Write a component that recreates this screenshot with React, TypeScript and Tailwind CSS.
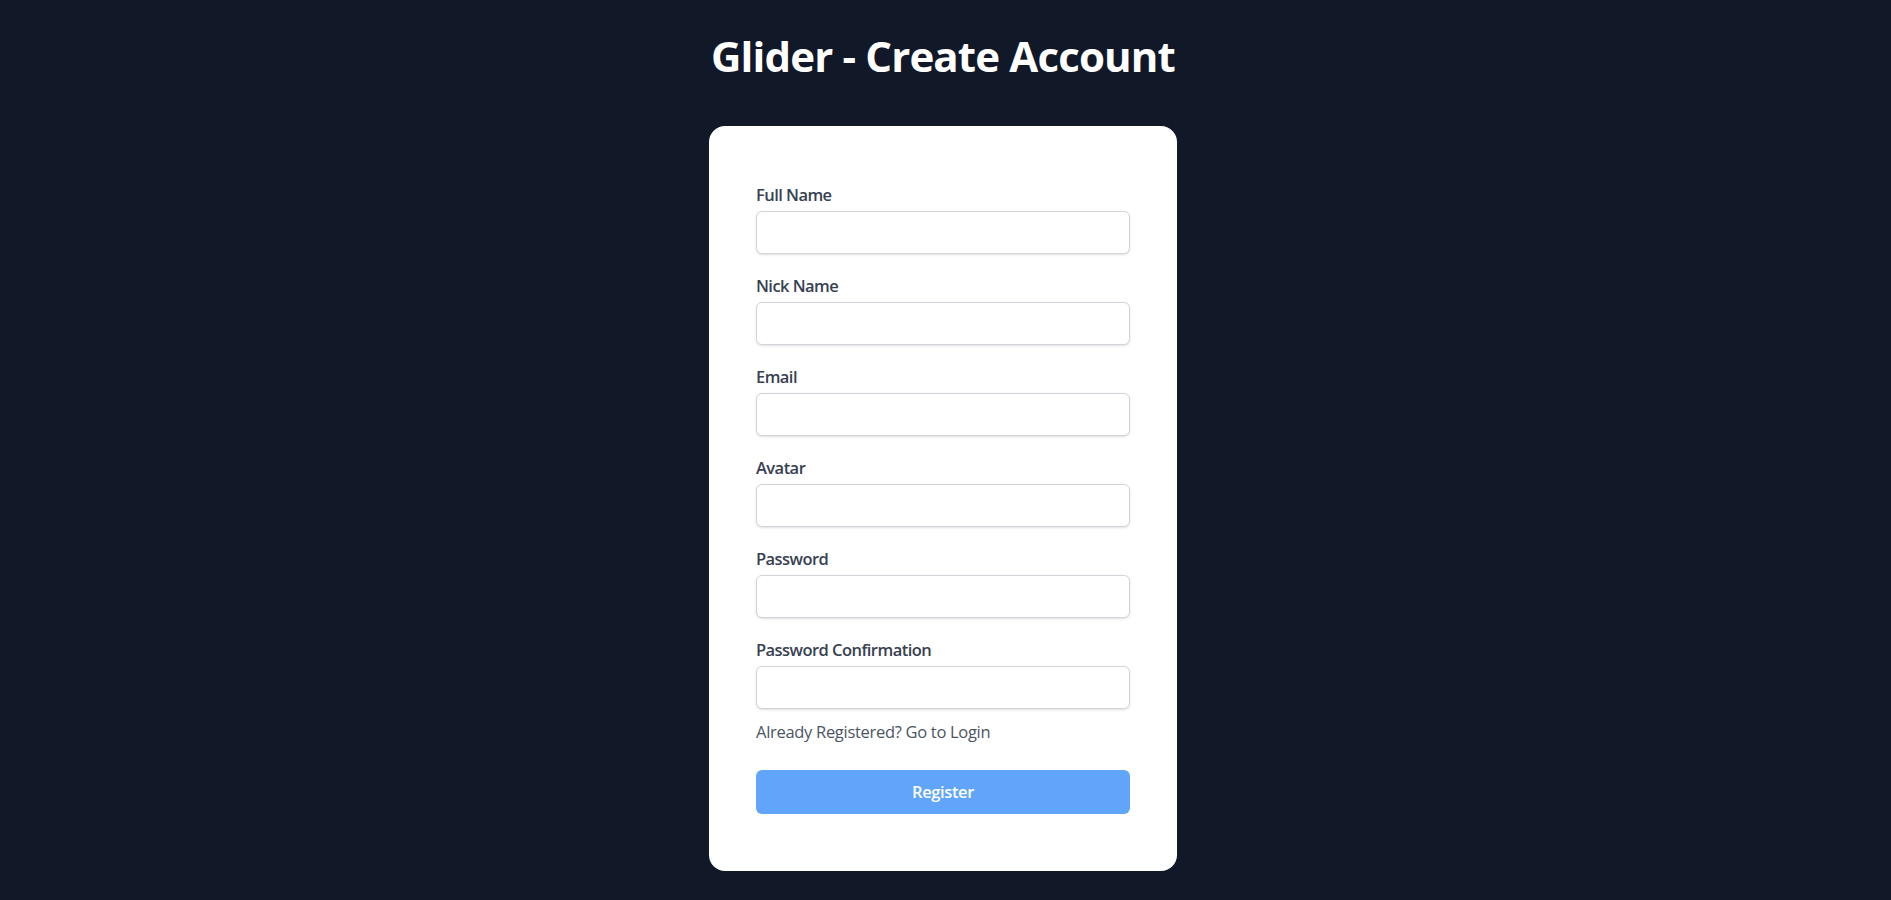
const fields = [
  { id: 'fullName', label: 'Full Name', type: 'text' },
  { id: 'nickName', label: 'Nick Name', type: 'text' },
  { id: 'email', label: 'Email', type: 'email' },
  { id: 'avatar', label: 'Avatar', type: 'text' },
  { id: 'password', label: 'Password', type: 'password' },
  { id: 'passwordConfirmation', label: 'Password Confirmation', type: 'password' },
]

const App = () => {
  return (
    <div className="flex min-h-screen flex-col items-center bg-[#111827] pr-[5px] font-['Open_Sans',sans-serif]">
      <h1 className="mt-[31px] text-[42px] leading-[50px] font-bold tracking-[-0.85px] text-white">
        Glider - Create Account
      </h1>

      <div className="mt-[45px] w-[468px] rounded-2xl bg-white px-[47px] pt-[57px] pb-[57px]">
        <form
          onSubmit={(e) => {
            e.preventDefault()
          }}
        >
          {fields.map((field, index) => (
            <div key={field.id} className={index === 0 ? '' : 'mt-[20px]'}>
              <label
                htmlFor={field.id}
                className="block text-[16.5px] leading-6 font-semibold tracking-[-0.55px] text-[#374151]"
              >
                {field.label}
              </label>
              <input
                id={field.id}
                name={field.id}
                type={field.type}
                className="mt-1 block h-[43px] w-full rounded-md border border-[#d1d5db] bg-white px-3 shadow-sm outline-none"
              />
            </div>
          ))}

          <a href="#" className="mt-[11px] block text-[16.5px] leading-6 tracking-[-0.3px] text-[#4b5563]">
            Already Registered? Go to Login
          </a>

          <button
            type="submit"
            className="mt-[26px] h-[44px] w-full rounded-md bg-[#60a5fa] text-[16.5px] font-semibold tracking-[-0.4px] text-white"
          >
            Register
          </button>
        </form>
      </div>
    </div>
  )
}

export default App
